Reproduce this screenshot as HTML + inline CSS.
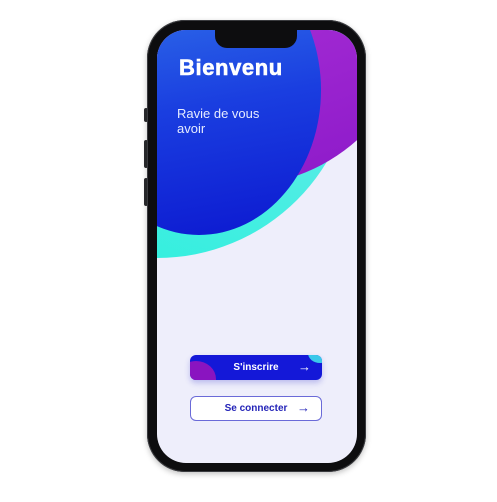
<!DOCTYPE html>
<html><head><style>
body{margin:0;width:497px;height:502px;background:#fff;position:relative;overflow:hidden;font-family:"Liberation Sans",sans-serif}
.frame{position:absolute;left:147px;top:20px;width:219px;height:452px;border-radius:38px;background:#0d0d0f;box-shadow:0 0 0 1px #3a3b3f inset,0 2px 6px rgba(0,0,0,.25)}
.btnside{position:absolute;left:144px;width:4px;background:#2a2b2e;border-radius:2px}
.screen{position:absolute;left:157px;top:30px;width:200px;height:433px;border-radius:29px;overflow:hidden;background:#eeeefb}
.e{position:absolute;border-radius:50%}
.notch{position:absolute;left:58px;top:0;width:82px;height:18px;background:#0d0d0f;border-radius:0 0 12px 12px}
.t1{position:absolute;left:22px;top:25px;color:#fff;font-weight:bold;font-size:22px;letter-spacing:.6px;-webkit-text-stroke:.6px #fff}
.t2{position:absolute;left:20px;top:76px;color:#e6ecff;font-size:13px;line-height:15px}
.b{position:absolute;left:33px;width:132px;height:25px;border-radius:6px;font-size:10px;font-weight:bold;overflow:hidden}
.b span{position:absolute;left:0;right:0;top:7px;text-align:center}
.b i{position:absolute;right:11px;top:4px;font-style:normal;font-size:13px;font-weight:bold}
</style></head><body>
<div class="btnside" style="top:108px;height:14px"></div>
<div class="btnside" style="top:140px;height:28px"></div>
<div class="btnside" style="top:178px;height:28px"></div>
<div class="frame"></div>
<div class="screen">
 <div class="e" style="left:-198px;top:-168px;width:396px;height:396px;background:linear-gradient(200deg,#8ee8f0,#28f0dc)"></div>
 <div class="e" style="left:-100px;top:-204px;width:360px;height:360px;background:linear-gradient(160deg,#c040e0,#8a18c8)"></div>
 <div class="e" style="left:-80px;top:-85px;width:244px;height:290px;background:linear-gradient(170deg,#3a86ee,#1a3ee0 55%,#0c18d0)"></div>
 <div class="notch"></div>
 <div class="t1">Bienvenu</div>
 <div class="t2">Ravie de vous<br>avoir</div>
 <div class="b" style="top:325px;background:#1418d8;color:#fff;box-shadow:0 3px 6px rgba(40,40,200,.25)">
  <div class="e" style="left:-14px;top:6px;width:40px;height:36px;background:#8a14c0"></div>
  <div class="e" style="right:-10px;top:-12px;width:24px;height:20px;background:#3ac8ea"></div>
  <span>S'inscrire</span><i>→</i></div>
 <div class="b" style="top:366px;background:#fff;color:#2424b8;border:1px solid #6a6ad8;box-sizing:border-box"><span style="top:6px">Se connecter</span><i style="top:3px">→</i></div>
</div>
</body></html>
